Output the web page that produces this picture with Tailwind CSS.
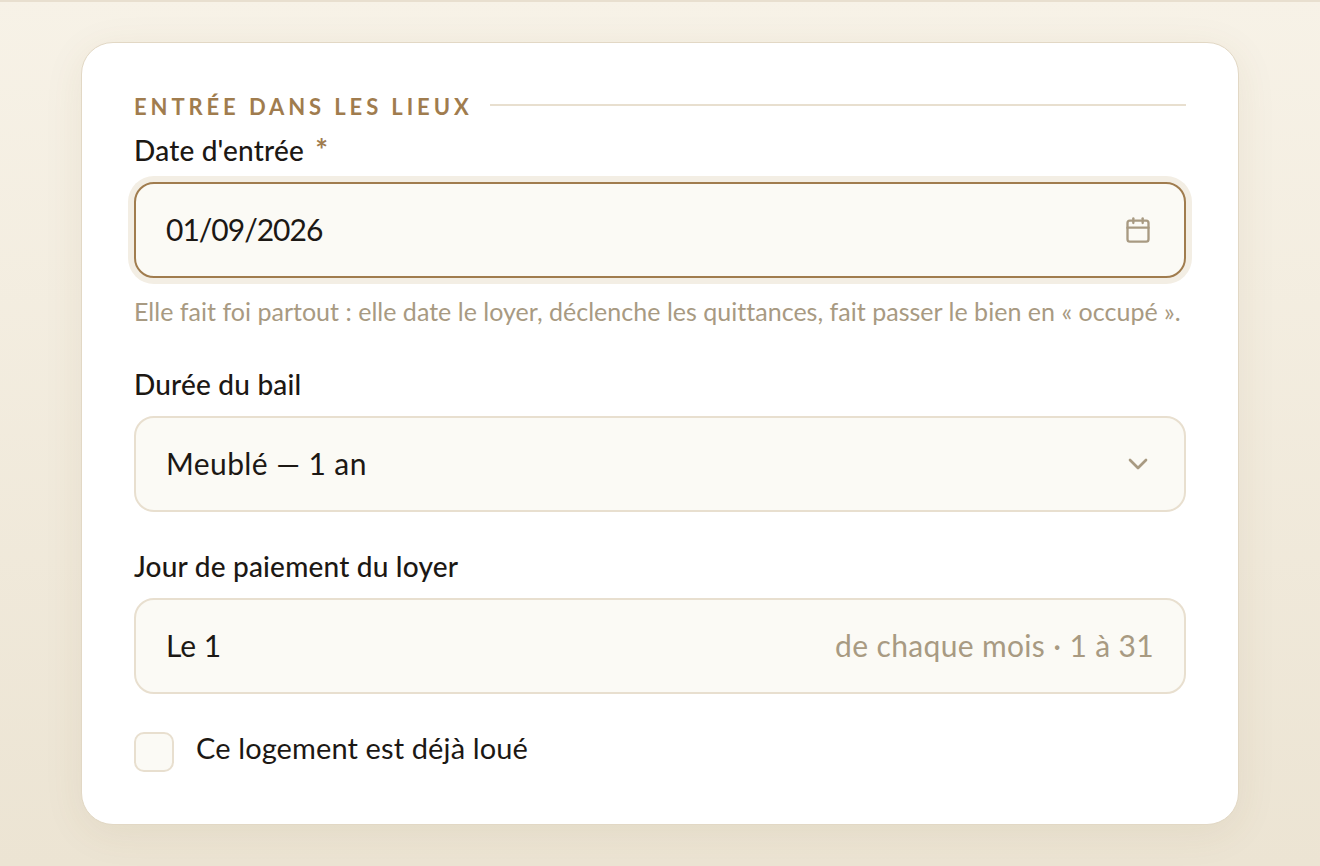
<!DOCTYPE html>
<html lang="fr">
<head>
    <meta charset="UTF-8">
    <meta name="viewport" content="width=device-width, initial-scale=1.0">
    <title>Entrée dans les lieux</title>
    <script src="https://cdn.jsdelivr.net/npm/@tailwindcss/browser@4"></script>
</head>
<body class="h-[866px] overflow-hidden bg-gradient-to-b from-[#f7f2e7] to-[#ece4d3] font-['Lato','Noto_Sans',sans-serif] text-[#1c1814]">
    <div class="h-[2px] bg-[#e8dfcf]"></div>
    <div class="px-[81px] pt-[40px]">
        <div class="h-[783px] rounded-[32px] border border-[#e2d8c5] bg-white px-[52px] pt-[51px] shadow-[0_8px_40px_rgba(120,90,40,0.08)]">
            <div class="flex items-center gap-[17px] h-[24px]">
                <span class="text-[22px] font-bold tracking-[3.9px] text-[#a07c4e] leading-none translate-y-[1px]">ENTRÉE DANS LES LIEUX</span>
                <div class="h-[2px] flex-1 -translate-y-[1px] bg-[#e8dfcf]"></div>
            </div>
            <div class="mt-[15px] h-[32px] text-[28px] font-medium tracking-[0.2px] leading-[32px]">Date d'entrée <span class="ml-[4px] text-[30px] font-bold text-[#a07c4e]">*</span></div>
            <div class="mt-[17px] flex h-[96px] items-center justify-between rounded-[20px] border-2 border-[#a07c4e] bg-[#fbfaf5] pl-[30px] pr-[32px] text-[30px] shadow-[0_0_0_6px_#f3eee4]">
                <span class="-translate-y-[1px] tracking-[-1px]">01/09/2026</span>
                <svg class="h-[28px] w-[28px]" viewBox="0 0 24 24" fill="none" stroke="#a89a82" stroke-width="2" stroke-linecap="round" stroke-linejoin="round">
                    <path d="M8 2v4"/><path d="M16 2v4"/><rect x="3" y="4" width="18" height="18" rx="2"/><path d="M3 10h18"/>
                </svg>
            </div>
            <p class="mt-[18px] h-[30px] text-[25px] tracking-[0.02px] leading-[30px] text-[#a89a82]">Elle fait foi partout : elle date le loyer, déclenche les quittances, fait passer le bien en « occupé ».</p>
            <div class="mt-[42px] h-[32px] text-[28px] font-medium tracking-[0.2px] leading-[32px]">Durée du bail</div>
            <div class="mt-[16px] flex h-[96px] items-center justify-between rounded-[20px] border-2 border-[#e8dfcf] bg-[#fbfaf5] pl-[30px] pr-[30px] text-[30px]">
                <span class="-translate-y-[1px] tracking-[0.4px]">Meublé — 1 an</span>
                <svg class="h-[32px] w-[32px]" viewBox="0 0 24 24" fill="none" stroke="#a89a82" stroke-width="2" stroke-linecap="round" stroke-linejoin="round">
                    <path d="m6 9 6 6 6-6"/>
                </svg>
            </div>
            <div class="mt-[38px] h-[32px] text-[28px] font-medium tracking-[0.2px] leading-[32px]">Jour de paiement du loyer</div>
            <div class="mt-[16px] flex h-[96px] items-center justify-between rounded-[20px] border-2 border-[#e8dfcf] bg-[#fbfaf5] pl-[30px] pr-[30px] text-[30px]">
                <span class="-translate-y-[1px]">Le 1</span>
                <span class="-translate-y-[1px] tracking-[0.35px] text-[#a89a82]">de chaque mois · 1 à 31</span>
            </div>
            <label class="mt-[38px] flex items-center gap-[22px]">
                <span class="h-[40px] w-[40px] rounded-[10px] border-2 border-[#e8dfcf] bg-[#fbfaf5]"></span>
                <span class="-mt-[9px] text-[29px] tracking-[0.12px] leading-[34px]">Ce logement est déjà loué</span>
            </label>
        </div>
    </div>
</body>
</html>
